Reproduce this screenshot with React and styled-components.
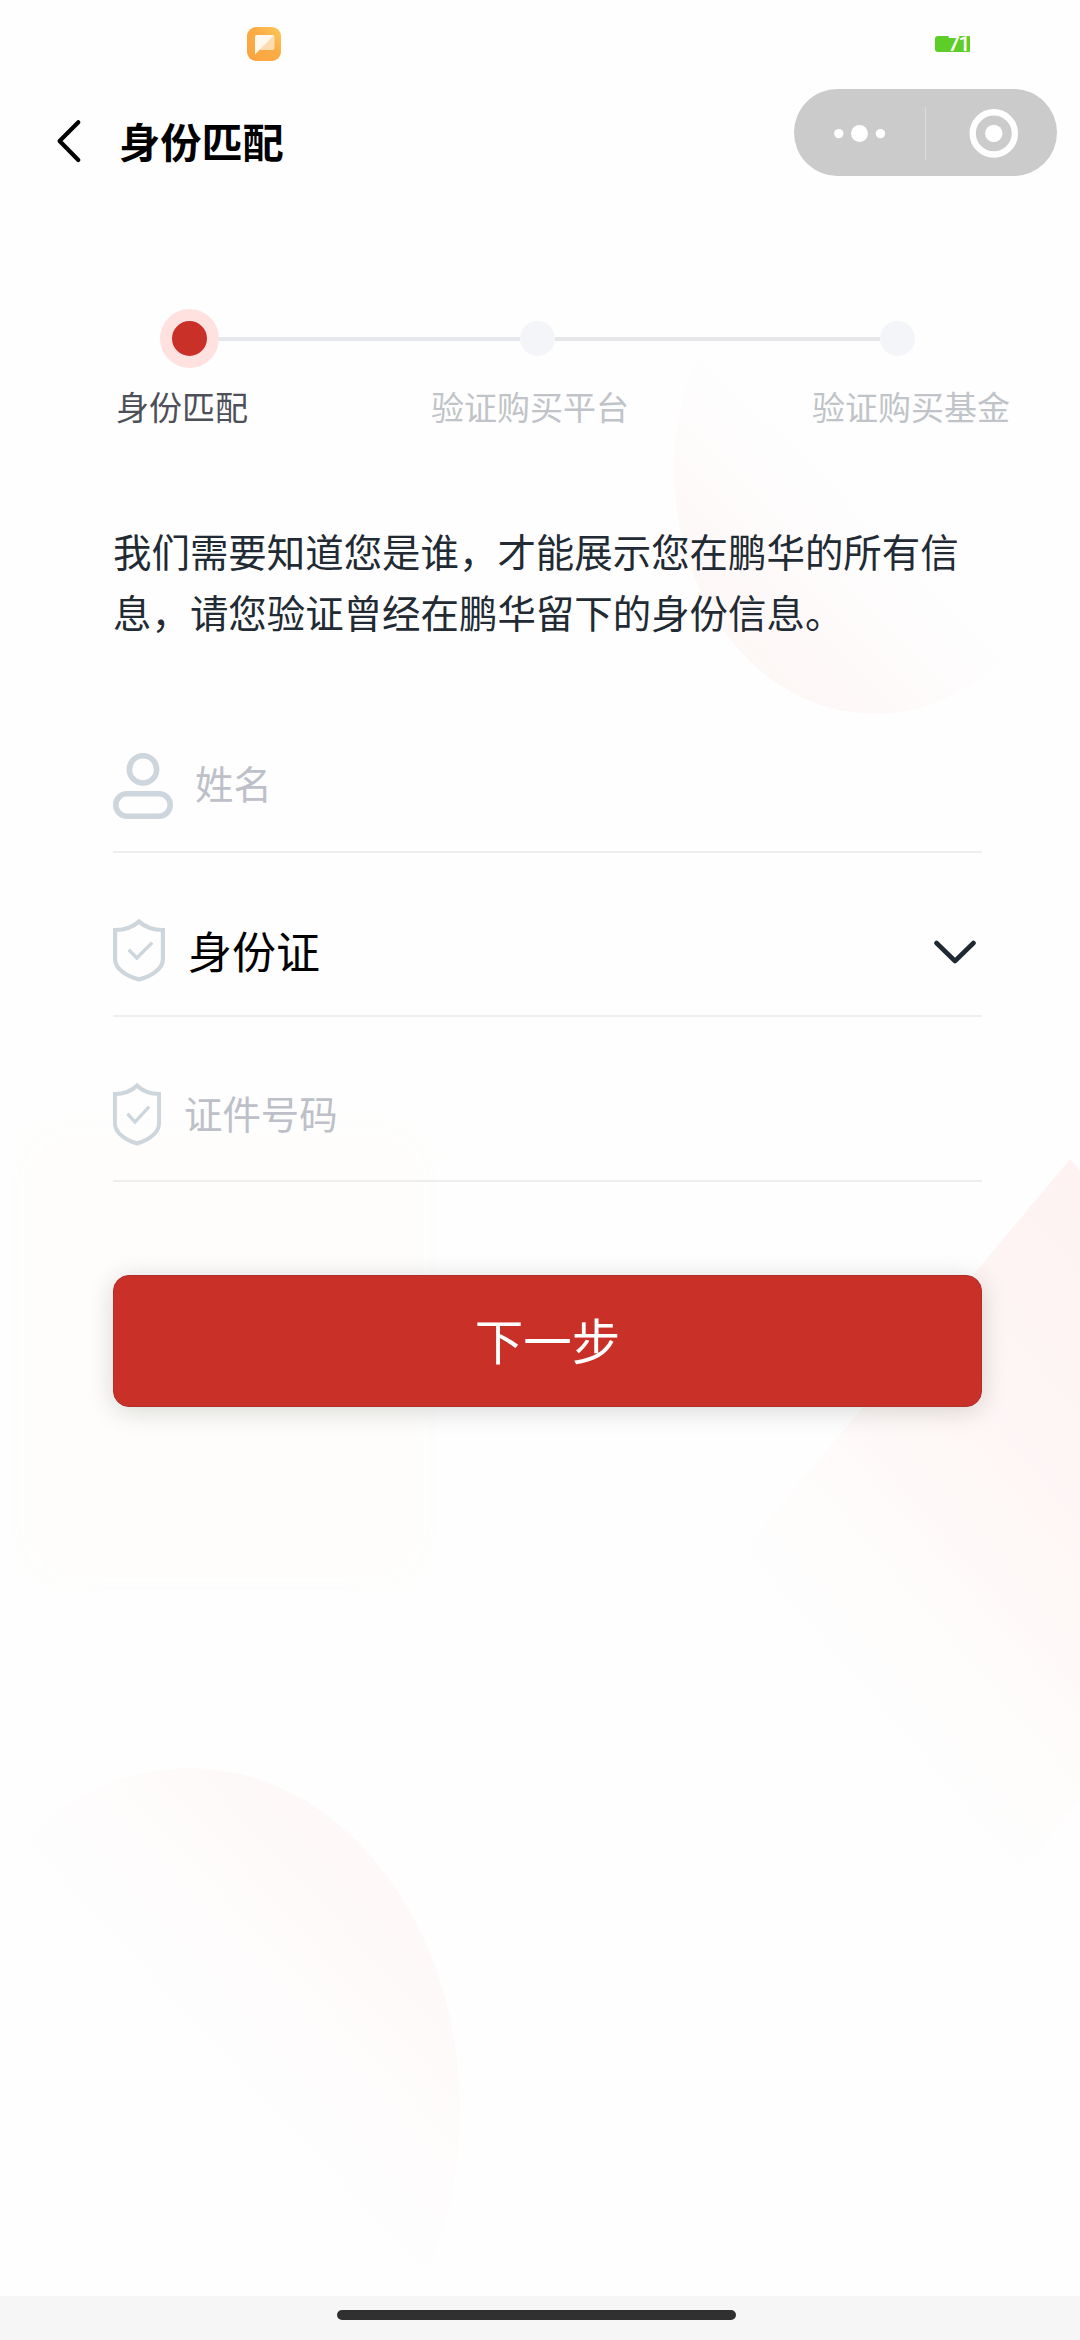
import React, { useState } from 'react';
import styled, { createGlobalStyle } from 'styled-components';

const GlobalStyle = createGlobalStyle`
  * {
    box-sizing: border-box;
  }

  body {
    margin: 0;
    background: #fefefe;
    font-family: 'Noto Sans CJK SC', 'Noto Sans', sans-serif;
  }
`;

const Page = styled.div`
  position: relative;
  display: flex;
  flex-direction: column;
  width: 1080px;
  height: 2340px;
  overflow: hidden;
  background: #fefefe;
`;

const Backdrop = styled.svg`
  position: absolute;
  top: 0;
  left: 0;
  width: 1080px;
  height: 2340px;
  pointer-events: none;
`;

const StatusBar = styled.div`
  position: relative;
  display: flex;
  justify-content: space-between;
  align-items: center;
  height: 89px;
  padding: 0 110px 1px 247px;
`;

const Battery = styled.div`
  display: flex;
  align-items: center;
  width: 35px;
  height: 16px;
  padding-left: 13px;
  border-radius: 3px 1px 1px 3px;
  background: #5fcd28;
  color: #fff;
  font: 500 21px/26px Roboto, sans-serif;
  letter-spacing: -1.5px;
`;

const NavBar = styled.header`
  position: relative;
  display: flex;
  align-items: center;
  height: 87px;
  padding: 0 23px 0 56px;
`;

const BackButton = styled.button`
  display: flex;
  margin: 16px 0 0;
  padding: 0;
  border: 0;
  background: none;
`;

const Title = styled.h1`
  flex: 1;
  margin: 14px 0 0 37px;
  color: #000;
  font-size: 41.2px;
  font-weight: 700;
  line-height: 56px;
`;

const Capsule = styled.div`
  display: flex;
  width: 263px;
  height: 87px;
  border-radius: 44px;
  background: #cbcbcb;
`;

const Main = styled.main`
  position: relative;
  flex: 1;
  padding: 132px 0 0;
`;

const Track = styled.div`
  display: flex;
  align-items: center;
  height: 60px;
  padding-left: 160px;
`;

const StepDot = styled.span`
  box-sizing: content-box;
  width: 35px;
  height: 35px;
  border: ${props => (props.$active ? '12.5px solid #ffe2e0' : '0')};
  border-radius: 50%;
  background: ${props => (props.$active ? '#c83028' : '#f4f5f9')};
`;

const StepLine = styled.span`
  width: ${props => props.$width}px;
  height: 4px;
  margin-top: 1px;
  background: ${props => props.$color};
`;

const StepLabels = styled.div`
  display: flex;
  gap: 183px;
  margin-top: 13px;
  padding-left: 116px;
`;

const StepLabel = styled.span`
  color: ${props => (props.$active ? '#4d5058' : '#c0c4c9')};
  font-size: 33px;
  line-height: 50px;
  white-space: nowrap;
`;

const Content = styled.div`
  width: 869px;
  margin-left: 113px;
`;

const Intro = styled.p`
  margin: 89px 0 0;
  color: #222a33;
  font-size: 38.45px;
  line-height: 61px;
`;

const Form = styled.form`
  display: flex;
  flex-direction: column;
  padding-top: 70px;
`;

const Field = styled.label`
  display: flex;
  align-items: center;
  height: ${props => props.$height}px;
  padding-top: ${props => props.$top}px;
  border-bottom: 2px solid #eee;

  svg {
    flex: none;
  }
`;

const Input = styled.input`
  flex: 1;
  min-width: 0;
  height: 60px;
  margin: 0 0 ${props => props.$lift}px ${props => props.$gap}px;
  padding: 0;
  border: 0;
  outline: 0;
  background: none;
  color: #000;
  font: 38.4px/60px 'Noto Sans CJK SC', sans-serif;

  &::placeholder {
    color: #bdc0c9;
    opacity: 1;
  }
`;

const Picked = styled.span`
  flex: 1;
  margin-left: 23px;
  color: #000;
  font-size: 44px;
  line-height: 60px;
`;

const Chevron = styled.svg`
  margin-top: 3px;
`;

const NextButton = styled.button`
  height: 132px;
  margin-top: 93px;
  padding: 0 0 4px;
  border: 1px solid #b02f29;
  border-radius: 16px;
  background: #c83028;
  box-shadow: 0 4px 26px rgba(0, 20, 10, 0.16);
  color: #fff;
  font: 48.5px/60px 'Noto Sans CJK SC', sans-serif;
`;

const HomeBar = styled.footer`
  position: relative;
  display: flex;
  height: 44px;
  padding: 14px 0 0 337px;
  background: #f6f6f6;
`;

const HomeIndicator = styled.span`
  width: 399px;
  height: 10px;
  border-radius: 5px;
  background: #303030;
`;

const BackdropShapes = () => (
  <Backdrop viewBox="0 0 1080 2340" aria-hidden="true">
    <defs>
      <linearGradient id="topEllipse" gradientUnits="userSpaceOnUse" x1="735" y1="645" x2="870" y2="510">
        <stop offset="0" stopColor="#fdf7f6" />
        <stop offset="1" stopColor="#fefefe" />
      </linearGradient>
      <linearGradient id="bottomEllipse" gradientUnits="userSpaceOnUse" x1="390" y1="1880" x2="200" y2="2055">
        <stop offset="0" stopColor="#fef8f8" />
        <stop offset="1" stopColor="#fefefe" />
      </linearGradient>
      <linearGradient id="diamond" gradientUnits="userSpaceOnUse" x1="1070" y1="1159" x2="671" y2="1505">
        <stop offset="0" stopColor="#fef2f2" />
        <stop offset="0.35" stopColor="#fef5f5" />
        <stop offset="0.62" stopColor="#fef9f8" />
        <stop offset="0.76" stopColor="#fefcfb" />
        <stop offset="1" stopColor="#fefefe" />
      </linearGradient>
      <filter id="soften" x="-20%" y="-20%" width="140%" height="140%">
        <feGaussianBlur stdDeviation="22" />
      </filter>
    </defs>
    <ellipse cx="875" cy="470" rx="201" ry="244" fill="url(#topEllipse)" />
    <rect x="26" y="1135" width="396" height="440" rx="30" fill="#fefdfb" filter="url(#soften)" />
    <path d="M1070 1159 1348 1480 1005 1891 727 1570Z" fill="url(#diamond)" />
    <ellipse cx="190" cy="2110" rx="270" ry="342" fill="url(#bottomEllipse)" />
  </Backdrop>
);

const AppIcon = () => (
  <svg width="34" height="34" viewBox="0 0 34 34">
    <defs>
      <linearGradient id="appIcon" x1="0" y1="1" x2="1" y2="0">
        <stop offset="0" stopColor="#fba33f" />
        <stop offset="0.6" stopColor="#fbae45" />
        <stop offset="1" stopColor="#fdc95a" />
      </linearGradient>
    </defs>
    <rect width="34" height="34" rx="9" fill="url(#appIcon)" />
    <path d="M9 8h16.5a2 2 0 0 1 2 2v11a2 2 0 0 1-2 2H13.5z" fill="#fddcb4" />
    <path d="M9.5 8H27L8 27.5V9.5A1.5 1.5 0 0 1 9.5 8z" fill="#fff8ee" />
  </svg>
);

const PersonIcon = () => (
  <svg width="60" height="66" viewBox="0 0 60 66" fill="none" stroke="#cdd6dc" strokeWidth="5.6">
    <circle cx="30" cy="16.4" r="13.6" />
    <rect x="2.8" y="40.8" width="54.4" height="22.4" rx="11.2" />
  </svg>
);

const ShieldIcon = ({ width }) => (
  <svg width={width} height="63" viewBox="0 0 52 63" preserveAspectRatio="none" fill="none" stroke="#cdd6dc" strokeWidth="4.2">
    <path d="M26 2.6C20.5 7.5 11.5 11 2.1 11v29.5C2.1 50 14 57.5 26 60.4 38 57.5 49.9 50 49.9 40.5V11C40.5 11 31.5 7.5 26 2.6z" />
    <path d="M15.7 30.8 23.8 39 39.2 23.6" strokeWidth="3.4" />
  </svg>
);

const CapsuleMenu = () => (
  <Capsule>
    <svg width="263" height="87" viewBox="0 0 263 87" fill="#fff">
      <circle cx="44.8" cy="44.6" r="4.7" />
      <circle cx="65.5" cy="44.6" r="8.5" />
      <circle cx="86.4" cy="44.6" r="4.7" />
      <path d="M131.5 18v53" stroke="#dadada" strokeWidth="1.3" />
      <circle cx="199.8" cy="44.4" r="21.1" fill="none" stroke="#fff" strokeWidth="6.4" />
      <circle cx="199.8" cy="44.4" r="8.7" />
    </svg>
  </Capsule>
);

export default function App() {
  const [name, setName] = useState('');
  const [idNumber, setIdNumber] = useState('');

  return (
    <Page>
      <GlobalStyle />
      <BackdropShapes />
      <StatusBar>
        <AppIcon />
        <Battery>71</Battery>
      </StatusBar>
      <NavBar>
        <BackButton type="button" aria-label="返回">
          <svg width="26" height="44" viewBox="0 0 26 44" fill="none" stroke="#000" strokeWidth="4.2" strokeLinecap="round" strokeLinejoin="round">
            <path d="M22.3 3.3 3.6 22l18.7 19" />
          </svg>
        </BackButton>
        <Title>身份匹配</Title>
        <CapsuleMenu />
      </NavBar>
      <Main>
        <Track>
          <StepDot $active />
          <StepLine $width={301} $color="#e6e6ee" />
          <StepDot />
          <StepLine $width={325} $color="#e6e6e8" />
          <StepDot />
        </Track>
        <StepLabels>
          <StepLabel $active>身份匹配</StepLabel>
          <StepLabel>验证购买平台</StepLabel>
          <StepLabel>验证购买基金</StepLabel>
        </StepLabels>
        <Content>
          <Intro>我们需要知道您是谁，才能展示您在鹏华的所有信息，请您验证曾经在鹏华留下的身份信息。</Intro>
          <Form onSubmit={e => e.preventDefault()}>
            <Field $height={141} $top={8}>
              <PersonIcon />
              <Input $gap={22} $lift={8} placeholder="姓名" value={name} onChange={e => setName(e.target.value)} />
            </Field>
            <Field $height={164} $top={32}>
              <ShieldIcon width={52} />
              <Picked>身份证</Picked>
              <Chevron width="48" height="26" viewBox="0 0 48 26" fill="none" stroke="#1f2933" strokeWidth="4.6" strokeLinecap="round" strokeLinejoin="round">
                <path d="M2.5 4 21 22 39.5 4" />
              </Chevron>
            </Field>
            <Field $height={165} $top={32}>
              <ShieldIcon width={48} />
              <Input $gap={23} $lift={5} placeholder="证件号码" value={idNumber} onChange={e => setIdNumber(e.target.value)} />
            </Field>
            <NextButton type="submit">下一步</NextButton>
          </Form>
        </Content>
      </Main>
      <HomeBar>
        <HomeIndicator />
      </HomeBar>
    </Page>
  );
}
